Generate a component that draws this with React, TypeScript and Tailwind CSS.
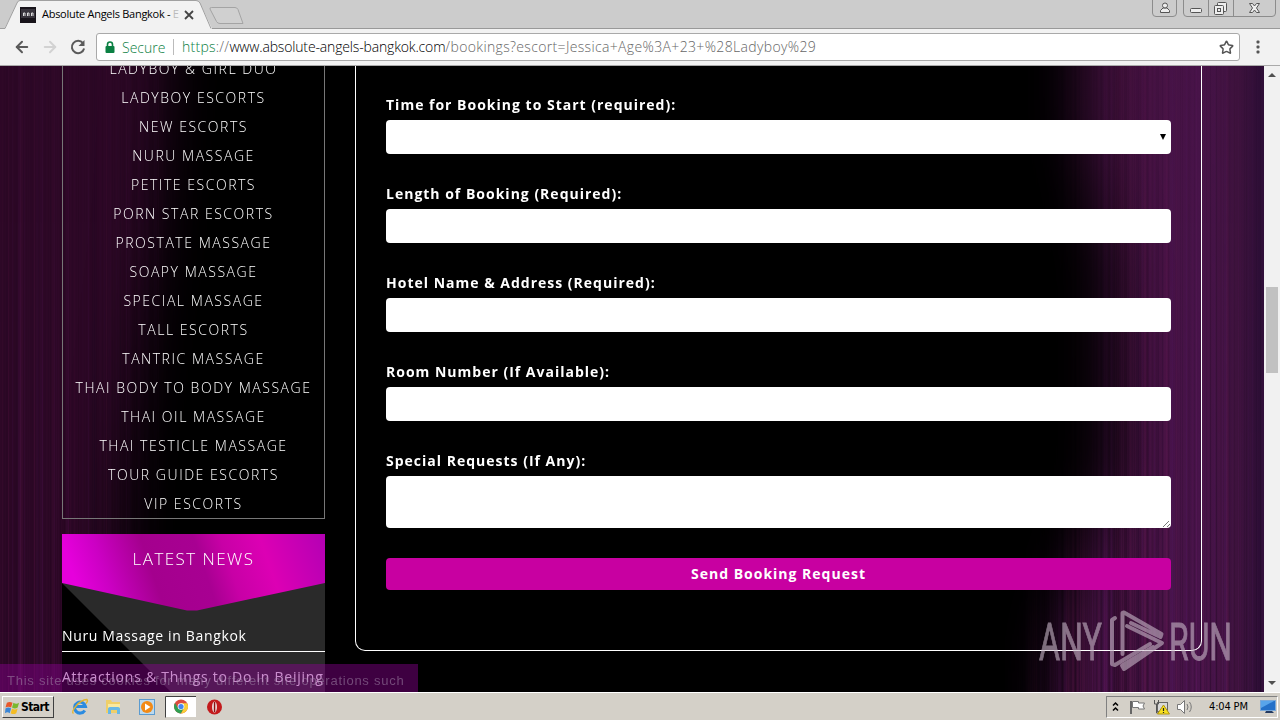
import { ArrowLeft, ArrowRight, Star } from 'lucide-react'

const CATEGORIES = [
  'LADYBOY & GIRL DUO',
  'LADYBOY ESCORTS',
  'NEW ESCORTS',
  'NURU MASSAGE',
  'PETITE ESCORTS',
  'PORN STAR ESCORTS',
  'PROSTATE MASSAGE',
  'SOAPY MASSAGE',
  'SPECIAL MASSAGE',
  'TALL ESCORTS',
  'TANTRIC MASSAGE',
  'THAI BODY TO BODY MASSAGE',
  'THAI OIL MASSAGE',
  'THAI TESTICLE MASSAGE',
  'TOUR GUIDE ESCORTS',
  'VIP ESCORTS',
]

const FIELDS = [
  'Length of Booking (Required):',
  'Hotel Name & Address (Required):',
  'Room Number (If Available):',
]

const STREAK_COLORS = ['#05000a', '#7a2080', '#1a0520', '#8a2468', '#0c0418', '#5a1a70']

// Small deterministic noise so the curtain looks the same on every render
function noise(n: number) {
  const v = Math.sin(n * 12.9898) * 43758.5453
  return v - Math.floor(v)
}

function streaks(from: number, to: number, strength: number) {
  const out = []
  for (let x = from; x < to; x += 2) {
    out.push({
      x,
      w: noise(x) > 0.5 ? 3 : 1,
      fill: STREAK_COLORS[Math.floor(noise(x + 1) * STREAK_COLORS.length)],
      opacity: (0.05 + noise(x + 2) * 0.25) * strength,
    })
  }
  return out
}

const STREAKS = [...streaks(0, 230, 0.6), ...streaks(1000, 1264, 0.8)]

function Curtain() {
  return (
    <svg className="absolute inset-0" width="1264" height="626" viewBox="0 0 1264 626">
      <defs>
        <linearGradient id="right" gradientUnits="userSpaceOnUse" x1="1000" y1="0" x2="1264" y2="0">
          <stop offset="0" stopColor="#360c38" />
          <stop offset="0.45" stopColor="#42113c" />
          <stop offset="0.75" stopColor="#471348" />
          <stop offset="0.9" stopColor="#3d123c" />
          <stop offset="1" stopColor="#2c0e36" />
        </linearGradient>
        <linearGradient id="streakFade" x1="0" y1="0" x2="0" y2="1">
          <stop offset="0" stopColor="#fff" stopOpacity="0.3" />
          <stop offset="0.5" stopColor="#fff" stopOpacity="0.7" />
          <stop offset="1" stopColor="#fff" />
        </linearGradient>
        <mask id="streakMask">
          <rect width="1264" height="626" fill="url(#streakFade)" />
        </mask>
        <filter id="soft" filterUnits="userSpaceOnUse" x="-100" y="-200" width="1500" height="1100">
          <feGaussianBlur stdDeviation="27" />
        </filter>
      </defs>
      <rect width="1264" height="626" fill="#000" />
      <rect width="250" height="626" fill="#2d0826" />
      <rect x="1000" width="264" height="626" fill="url(#right)" />
      <g mask="url(#streakMask)">
        {STREAKS.map((s) => (
          <rect key={s.x} x={s.x} y="0" width={s.w} height="626" fill={s.fill} opacity={s.opacity} />
        ))}
      </g>
      <path
        d="M175 -150L155 160L125 400L105 800H1040L1060 560L1115 400L1112 200L1082 60V-150z"
        fill="#000"
        filter="url(#soft)"
      />
      <rect x="240" width="765" height="626" fill="#000" />
    </svg>
  )
}

function BrowserChrome() {
  return (
    <header className="relative h-[66px] shrink-0 bg-[#cccccc] font-['Open_Sans',sans-serif]">
      <svg className="absolute inset-0" width="1280" height="66" viewBox="0 0 1280 66">
        <path d="M0 28.5H1280V66H0z" fill="#f2f2f2" />
        <path d="M0 28.5H1280" stroke="#999" />
        <path d="M4 29.5L17 3Q18 .5 20 .5H196Q198.500 .5 200 3L212 28.500V30H4z" fill="#f2f2f2" />
        <path d="M0 28.5H5L17 3Q18 .5 20 .5H196Q198.500 .5 200 3L211 28.5" fill="none" stroke="#a0a0a0" />
        <path d="M211.500 7.500H235Q237 7.500 238 9.500L243 23.500H220Q217.500 23.500 216.500 21.500L210 9Q209.500 7.500 211.500 7.500z" fill="#d0d0d0" stroke="#a4a4a4" />
        <rect x="20" y="7" width="16" height="16" fill="#18141a" />
        <rect x="21" y="9" width="14" height="9" fill="#38343c" />
        <path d="M23.500 16v-3h1.500v3M27.500 16v-3h1.500v3M31.500 16v-3h1.500v3" fill="none" stroke="#ddd" />
        <path d="M185 11l8 8M193 11l-8 8" stroke="#444" strokeWidth="1.800" />
        <path d="M0 65.500H1280" stroke="#aaa" />
        {/* Window buttons */}
        <g fill="none" stroke="#8c8c8c">
          <path d="M1152.500 0V13Q1152.500 16.500 1156 16.500H1173Q1176.500 16.500 1176.500 13V0" />
          <path d="M1183.500 0V13Q1183.500 16.500 1187 16.500H1272Q1275.500 16.500 1275.500 13V0M1208.500 0V16M1233.500 0V16" />
        </g>
        <g fill="#eee" stroke="#555">
          <path d="M1160.500 12.500v-2l2.500-2.500h4l2.500 2.500v2z" />
          <circle cx="1165" cy="5.500" r="2.500" />
          <rect x="1190.500" y="8.500" width="11" height="4" rx="1" />
          <rect x="1217.500" y="2.500" width="9" height="9" rx="1" />
          <rect x="1214.500" y="5.500" width="9" height="9" rx="1" />
          <rect x="1217.500" y="8.500" width="3" height="3" />
          <path d="M1249.500 3.500h3l2 2.500 2-2.500h3l-3 4.500 3 4.500h-3l-2-2.500-2 2.500h-3l3-4.500z" />
        </g>
      </svg>
      <div className="relative flex h-[29px] items-center pl-[42px]">
        <span className="w-[138px] whitespace-nowrap text-[11px] tracking-[-0.280px] text-black">
          Absolute Angels Bangkok - <span className="text-[#bbb]">E</span>
        </span>
      </div>
      <div className="relative flex h-[36px] items-center pl-[13px]">
        <ArrowLeft size={18} strokeWidth={2.600} color="#5a5a5a" />
        <ArrowRight size={18} strokeWidth={2.600} color="#d2d2d2" className="ml-[10px]" />
        <svg className="ml-[11px]" width="16" height="16" viewBox="0 0 16 16">
          <path d="M13 4.200A6.200 6.200 0 1 0 14.100 9.500" fill="none" stroke="#5a5a5a" strokeWidth="2" />
          <path d="M14.500 1v6h-6z" fill="#5a5a5a" />
        </svg>
        <div className="ml-[10px] flex h-[28px] w-[1144px] items-center whitespace-nowrap rounded-[3px] border border-[#a9a9a9] bg-white pl-[8px] pr-[5px] text-[14px]">
          <svg width="10" height="13" viewBox="0 0 10 13">
            <path d="M2.500 6V3.500a2.500 2.500 0 0 1 5 0V6" fill="none" stroke="#0b8043" strokeWidth="1.600" />
            <rect x="0.500" y="5" width="9" height="7" rx="1" fill="#0b8043" />
          </svg>
          <span className="ml-[7px] w-[50px] font-light text-[#0b8043]">Secure</span>
          <span className="ml-px h-[16px] w-px bg-[#bbb]" />
          <span className="ml-[8px] grow pb-px font-light text-[#666]">
            <span className="tracking-[0.250px]"><span className="text-[#0b8043]">https</span>://</span>
            <span className="tracking-[-0.160px] text-black">www.absolute-angels-bangkok.com</span>
            <span className="tracking-[0.350px]">/bookings?escort=Jessica+Age%3A+23+%28Ladyboy%29</span>
          </span>
          <Star size={15} strokeWidth={2.400} color="#555" />
        </div>
        <svg className="ml-[16px]" width="4" height="14" viewBox="0 0 4 14" fill="#555">
          <rect width="3" height="3" rx="1" x="0.500" y="0.500" />
          <rect width="3" height="3" rx="1" x="0.500" y="5.500" />
          <rect width="3" height="3" rx="1" x="0.500" y="10.500" />
        </svg>
      </div>
    </header>
  )
}

function Sidebar() {
  return (
    <aside className="relative flex w-[263px] shrink-0 flex-col text-white">
      <ul className="-mt-[12px] flex flex-col border-x border-b border-[#777] text-center text-[14px] font-light leading-[29px] tracking-[1.540px]">
        {CATEGORIES.map((name) => (
          <li key={name} className="h-[29px] whitespace-nowrap">
            {name}
          </li>
        ))}
      </ul>
      <section className="relative mt-[15px] h-[158px] bg-black">
        <svg className="absolute inset-0" width="263" height="158" viewBox="0 0 263 158">
          <defs>
            <linearGradient id="banner" x1="0" y1="0.100" x2="1" y2="0">
              <stop offset="0" stopColor="#e600dc" />
              <stop offset="0.120" stopColor="#cc00c4" />
              <stop offset="0.300" stopColor="#a4008e" />
              <stop offset="0.500" stopColor="#a80092" />
              <stop offset="0.600" stopColor="#c800a6" />
              <stop offset="0.750" stopColor="#dc00b4" />
              <stop offset="1" stopColor="#b400b4" />
            </linearGradient>
          </defs>
          <path d="M0 49H263V158H109z" fill="#2a2a2a" />
          <path d="M0 0H263V49L135 76.500H125L0 49z" fill="url(#banner)" />
        </svg>
        <div className="relative">
          <h2 className="h-[77px] pt-[12px] text-center text-[17px] font-light leading-[26px] tracking-[1.450px]">
            LATEST NEWS
          </h2>
          <p className="flex h-[41px] items-center whitespace-nowrap border-b border-white pt-[9px] text-[14px] tracking-[0.650px]">
            Nuru Massage in Bangkok
          </p>
          <p className="flex h-[40px] items-center whitespace-nowrap pt-[8px] text-[14px] tracking-[0.750px]">
            Attractions &amp; Things to Do in Beijing
          </p>
        </div>
      </section>
    </aside>
  )
}

function BookingForm() {
  return (
    <main className="ml-[30px] flex h-[585px] w-[847px] flex-col rounded-b-[10px] border-x border-b border-white px-[30px] pt-[26px] text-[14px] font-bold tracking-[1px] text-white">
      <label className="mb-[35px] flex flex-col">
        <span className="h-[28px] leading-[26px]">Time for Booking to Start (required):</span>
        <span className="flex h-[34px] items-center justify-end rounded-[4px] bg-white pr-[5px]">
          <svg width="6" height="6" viewBox="0 0 6 6">
            <path d="M0 0H6L3 6z" fill="#000" />
          </svg>
        </span>
      </label>
      {FIELDS.map((field) => (
        <label key={field} className="mb-[35px] flex flex-col">
          <span className="h-[20px] leading-[10px]">{field}</span>
          <span className="h-[34px] rounded-[4px] bg-white" />
        </label>
      ))}
      <label className="flex flex-col">
        <span className="h-[20px] leading-[10px]">Special Requests (If Any):</span>
        <span className="flex h-[52px] items-end justify-end rounded-[4px] bg-white">
          <svg width="10" height="9" viewBox="0 0 10 9">
            <path d="M2 8l6-6M6 8l3-3" stroke="#555" strokeWidth="0.800" />
          </svg>
        </span>
      </label>
      <button className="mt-[30px] h-[32px] shrink-0 rounded-[4px] bg-[#c800a1] pb-px">Send Booking Request</button>
    </main>
  )
}

function Scrollbar() {
  return (
    <div className="flex w-[16px] flex-col items-center justify-between bg-[#f1f1f1]">
      <svg className="mt-[7px] shrink-0" width="8" height="4" viewBox="0 0 8 4">
        <path d="M0 4L4 0L8 4z" fill="#505050" />
      </svg>
      <div className="mb-auto mt-[210px] h-[86px] w-[12px] bg-[#c1c1c1]" />
      <svg className="mb-[7px] shrink-0" width="8" height="4" viewBox="0 0 8 4">
        <path d="M0 0L4 4L8 0z" fill="#505050" />
      </svg>
    </div>
  )
}

function Watermark() {
  return (
    <svg
      className="absolute left-[1036px] top-[542px] opacity-60"
      width="200"
      height="68"
      viewBox="0 0 200 68"
      fontFamily="Roboto, sans-serif"
      fontSize="52"
      fill="#c8b8c8"
    >
      <g stroke="#c8b8c8" strokeWidth="0.900">
        <text x="3" y="52" textLength="63" lengthAdjust="spacingAndGlyphs">ANY</text>
        <text x="133" y="52" textLength="63" lengthAdjust="spacingAndGlyphs">RUN</text>
      </g>
      <g fill="none" stroke="#c8b8c8" strokeWidth="4" strokeLinecap="round" strokeLinejoin="round">
        <path d="M86.500 46V5L88 4.500L125.500 26L124.500 29L95 15" />
        <path d="M79 10L76 12V56L79 57L114 36" />
        <path d="M91 18L126 35L88 61L86 57.500L117 39" />
      </g>
    </svg>
  )
}

function Taskbar() {
  return (
    <footer className="flex h-[28px] shrink-0 items-center border-t border-white bg-[#d4d0c8] font-['DejaVu_Sans_Condensed','DejaVu_Sans',sans-serif] text-black">
      <div className="ml-[2px] mt-px flex h-[22px] w-[52px] items-center border border-b-[#404040] border-l-white border-r-[#404040] border-t-white pl-[2px]">
        <svg width="15" height="15" viewBox="0 0 16 16">
          <path d="M2 3q3-2 6 0l-1.500 5q-3-1.500-6 0z" fill="#e8582a" />
          <path d="M9 3q3 2 6 0l-1.500 5q-3 2-6 0z" fill="#7ab82e" />
          <path d="M.5 9q3-2 6 0L5 14q-2.500-2-5 0z" fill="#3a86d6" />
          <path d="M7.500 9q3 2 6 0L12 14q-3 2-6 0z" fill="#f4bc24" />
        </svg>
        <span className="ml-px text-[12px] font-bold tracking-[-0.550px]">Start</span>
      </div>
      <svg className="ml-[17px]" width="160" height="26" viewBox="0 0 160 26">
        {/* Internet Explorer */}
        <path d="M13.800 16.500A5.500 5.500 0 1 1 14.500 12.500H5" fill="none" stroke="#2b8be0" strokeWidth="3" />
        <path d="M2.500 19.500Q0 18 5 12T16 5.500Q17.500 6.500 15 9.500" fill="none" stroke="#e5b52e" strokeWidth="1.300" />
        {/* Explorer */}
        <path d="M35 6h5l1 2h8v11H35z" fill="#efcf69" />
        <rect x="37" y="10" width="12" height="4" fill="#f9e9a0" />
        <path d="M37 20v-5q0-2 2-2h8q2 0 2 2v5h-3v-4h-6v4z" fill="#68b8e6" />
        {/* Media player */}
        <rect x="68.500" y="5.500" width="15" height="15" fill="#bcd9ee" stroke="#5b9bd0" />
        <circle cx="76" cy="13" r="6" fill="#f28a16" />
        <path d="M74 9.500v7l5.500-3.500z" fill="#fff" />
        {/* Chrome, the active window */}
        <rect x="95" y="2" width="30" height="21" fill="#fff" />
        <path d="M94.500 23.500V2.500H125" fill="none" stroke="#404040" />
        <circle cx="110" cy="12.500" r="7" fill="#dd4b3e" />
        <path d="M104 9A7 7 0 0 0 110 19.500L113 14H107z" fill="#2fa052" />
        <path d="M110 19.500A7 7 0 0 0 116.200 9.200H110L113 14z" fill="#f9cf38" />
        <circle cx="110" cy="12.500" r="3.300" fill="#fff" />
        <circle cx="110" cy="12.500" r="2.600" fill="#4586ef" />
        {/* Opera */}
        <circle cx="143.500" cy="13" r="7.500" fill="#c31a1c" />
        <ellipse cx="143.500" cy="13" rx="2.400" ry="5.500" fill="#f2eaea" />
        <rect x="142.800" y="8" width="1.500" height="10" fill="#8c1010" />
      </svg>
      <div className="ml-auto mr-[2px] mt-px flex h-[22px] w-[172px] items-center border border-b-white border-l-[#808080] border-r-white border-t-[#808080]">
        <svg width="86" height="20" viewBox="0 0 86 20">
          <path d="M6 8.500L8.500 6L11 8.500M6 13.500L8.500 11L11 13.500" fill="none" stroke="#000" strokeWidth="1.500" />
          <path d="M24 4v13" stroke="#666" strokeWidth="2" />
          <path d="M25.500 4.500h6v1.500h6l-1.500 3 1.500 3h-6v-1.500h-6z" fill="#fff" stroke="#777" />
          <rect x="50.500" y="5.500" width="10" height="9" fill="#d8d8d8" stroke="#666" />
          <path d="M47.500 3v4h4V3M49.500 7v9h4" fill="none" stroke="#555" />
          <path d="M56.500 8L62.500 17H50.500z" fill="#f7e01f" stroke="#b09510" />
          <path d="M56.500 11v3M56.500 15v1" stroke="#222" strokeWidth="1.200" />
          <path d="M70.500 7.500h3l4-4v13l-4-4h-3z" fill="#fff" stroke="#777" />
          <path d="M80 7q2 3 0 6M82.500 5q3.500 5 0 10" fill="none" stroke="#777" />
        </svg>
        <span className="ml-[16px] w-[42px] whitespace-nowrap text-[11px] tracking-[-0.150px]">4:04 PM</span>
        <svg className="ml-[9px]" width="16" height="14" viewBox="0 0 16 14">
          <rect x="0.500" y="0.500" width="15" height="10" fill="#2470c8" stroke="#7aa8d8" />
          <path d="M1 1H14L1 8z" fill="#58a4ea" />
          <path d="M6 11h6l2 2H5z" fill="#233a60" />
        </svg>
      </div>
    </footer>
  )
}

export default function App() {
  return (
    <div className="flex h-[720px] w-[1280px] flex-col overflow-hidden bg-black">
      <BrowserChrome />
      <div className="relative flex h-[626px] shrink-0 overflow-hidden font-['Open_Sans',sans-serif]">
        <Curtain />
        <div className="relative flex w-[1264px] items-start pl-[62px]">
          <Sidebar />
          <BookingForm />
        </div>
        <Scrollbar />
        <Watermark />
        {/* Cookie notice, caught mid fade */}
        <div className="absolute bottom-0 left-0 flex h-[28px] w-[418px] items-center whitespace-nowrap bg-[#8a0090]/45 pl-[7px] pt-[6px] font-['Liberation_Sans',sans-serif] text-[13px] tracking-[0.750px] text-[#a890b0]/50">
          This site uses cookies for many different site operations such
        </div>
      </div>
      <Taskbar />
    </div>
  )
}
